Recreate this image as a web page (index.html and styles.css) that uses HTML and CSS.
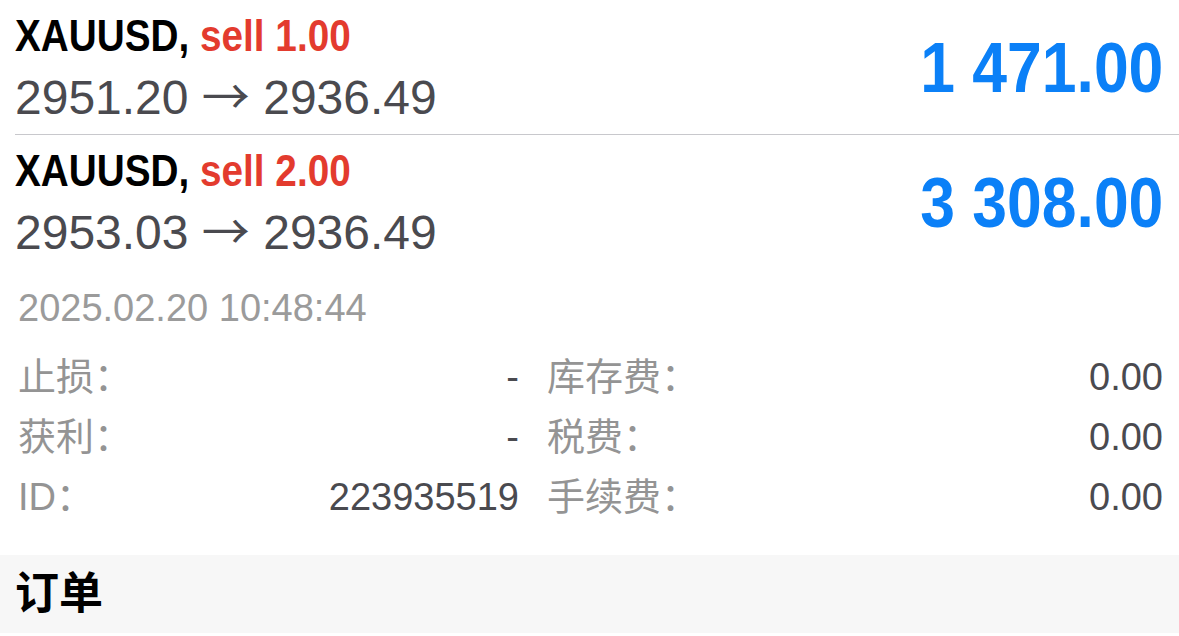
FILE: index.html
```html
<!DOCTYPE html>
<html lang="zh">
<head>
    <meta charset="UTF-8"/>
    <meta name="viewport" content="width=device-width, initial-scale=1.0"/>
    <title>持仓</title>
    <link rel="stylesheet" href="styles.css">
</head>
<body>
<section class="positions">
    <div class="position">
        <div class="position-info">
            <div class="position-title"><span class="condensed">XAUUSD, <span class="sell">sell 1.00</span></span></div>
            <div class="position-price">2951.20 <span class="arrow">→</span> 2936.49</div>
        </div>
        <div class="position-profit"><span class="condensed">1 471.00</span></div>
    </div>
    <div class="position">
        <div class="position-info">
            <div class="position-title"><span class="condensed">XAUUSD, <span class="sell">sell 2.00</span></span></div>
            <div class="position-price">2953.03 <span class="arrow">→</span> 2936.49</div>
        </div>
        <div class="position-profit"><span class="condensed">3 308.00</span></div>
    </div>
</section>

<section class="details">
    <div class="details-date">2025.02.20 10:48:44</div>
    <div class="details-grid">
        <div class="detail"><span class="detail-label">止损：</span><span class="detail-value">-</span></div>
        <div class="detail"><span class="detail-label">库存费：</span><span class="detail-value">0.00</span></div>
        <div class="detail"><span class="detail-label">获利：</span><span class="detail-value">-</span></div>
        <div class="detail"><span class="detail-label">税费：</span><span class="detail-value">0.00</span></div>
        <div class="detail"><span class="detail-label">ID：</span><span class="detail-value">223935519</span></div>
        <div class="detail"><span class="detail-label">手续费：</span><span class="detail-value">0.00</span></div>
    </div>
</section>

<section class="orders-header">
    <h2>订单</h2>
</section>
</body>
</html>
```

FILE: styles.css
```css
* {
    margin: 0;
    padding: 0;
    box-sizing: border-box;
}

html body {
    width: 1179px;
    background-color: #fff;
    font-family: "Liberation Sans", "Noto Sans CJK SC", sans-serif;
    color: #4a4a4f;
}

.positions {
    padding-left: 15px;
}

.position {
    display: flex;
    justify-content: space-between;
    align-items: center;
    padding: 10px 16px 0 0;
}

.position:first-child {
    border-bottom: 1px solid #c8c8cc;
}

/* no condensed face installed, squeeze the bold one */
.condensed {
    display: inline-block;
    white-space: nowrap;
}

.position-title {
    font-weight: 700;
    font-size: 44px;
    line-height: 52px;
    color: #000;
}

.position-title .condensed {
    transform: scaleX(0.88);
    transform-origin: left center;
}

.position-title .sell {
    color: #e33b2e;
}

.position-price {
    height: 72px;
    font-size: 48px;
    line-height: 72px;
    color: #4a4a4f;
}

.position-price .arrow {
    font-family: "Noto Sans CJK SC", sans-serif;
    font-weight: 400;
    line-height: 40px;
}

.position-profit {
    font-weight: 700;
    font-size: 71px;
    color: #0b80f7;
    margin-top: -10px;
}

.position-profit .condensed {
    transform: scaleX(0.88);
    transform-origin: right center;
}

.details {
    padding: 16px 16px 0 18px;
}

.details-date {
    font-size: 38px;
    line-height: 46px;
    color: #9b9b9b;
}

.details-grid {
    display: grid;
    grid-template-columns: 501px 616px;
    column-gap: 28px;
    margin-top: 16px;
}

.detail {
    display: flex;
    justify-content: space-between;
    font-size: 38px;
    line-height: 60px;
}

.detail-label {
    color: #949494;
}

.detail-value {
    color: #4a4a4f;
}

.orders-header {
    margin-top: 28px;
    background-color: #f7f7f7;
    height: 78px;
    padding: 0 0 8px 15px;
    display: flex;
    align-items: center;
}

.orders-header h2 {
    font-size: 44px;
    font-weight: 700;
    color: #000;
}
```
